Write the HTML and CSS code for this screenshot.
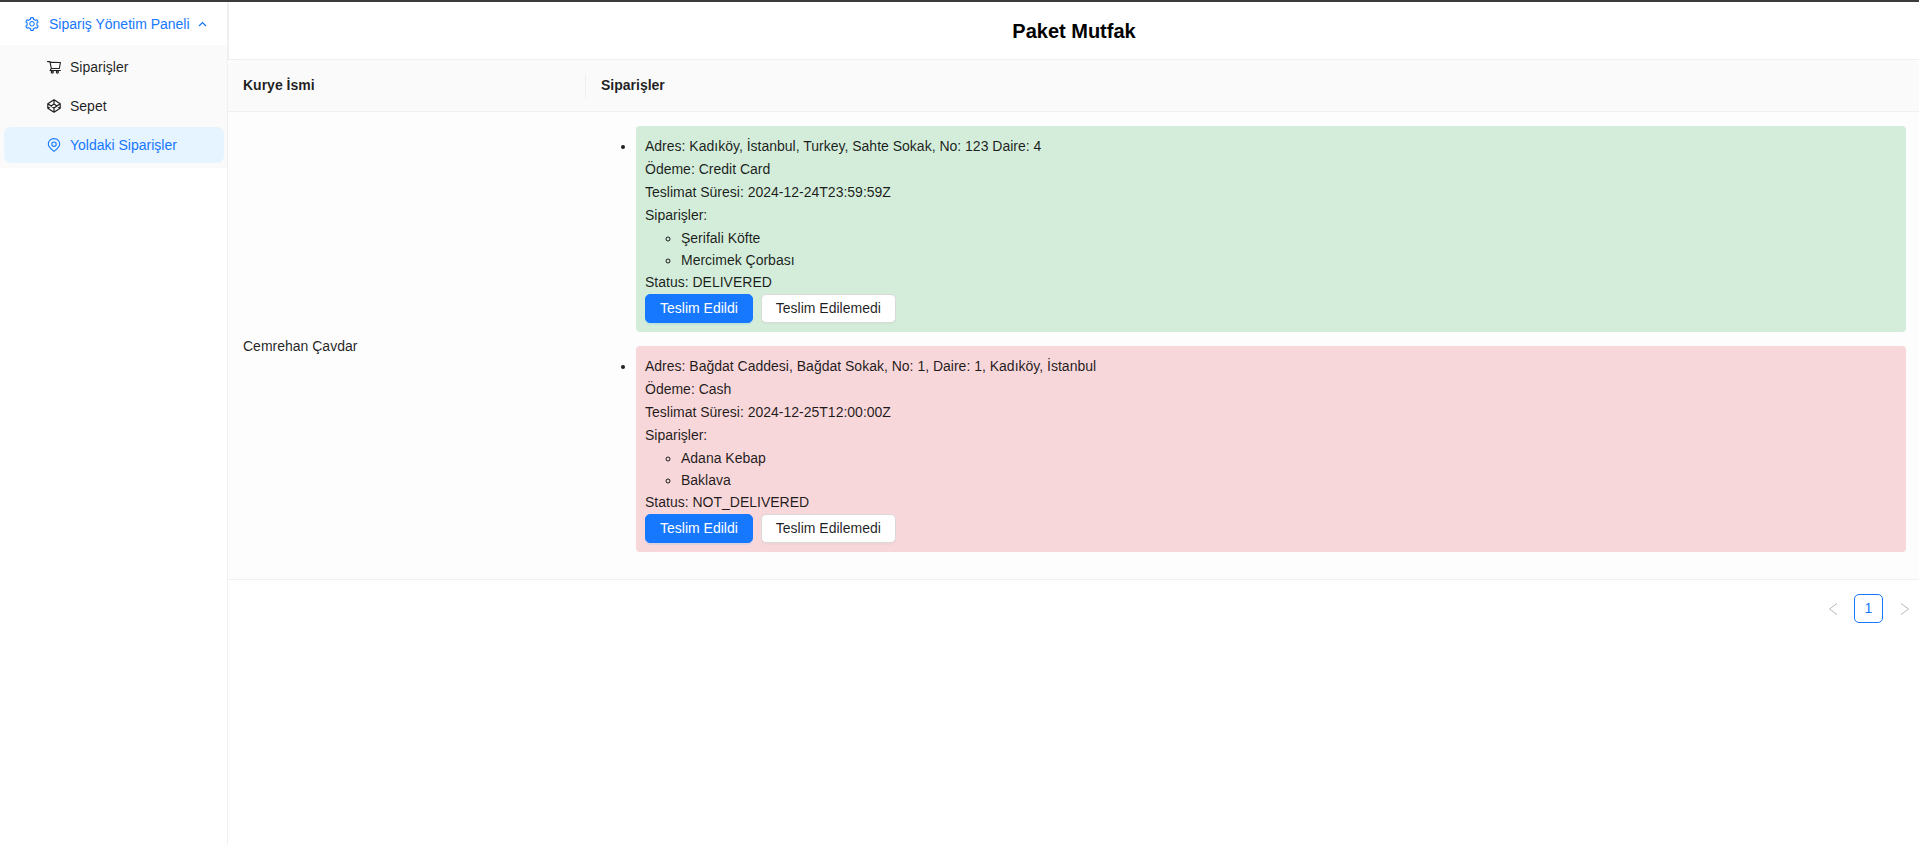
FILE: index.html
```html
<!DOCTYPE html>
<html lang="tr">
<head>
<meta charset="utf-8">
<title>Paket Mutfak</title>
<link rel="stylesheet" href="styles.css">
</head>
<body>
<div class="layout">
  <nav class="sidebar">
    <button class="menu-title" type="button" aria-expanded="true">
      <svg class="icon" viewBox="64 64 896 896" fill="currentColor" aria-hidden="true"><path d="M924.8 625.7l-65.5-56c3.1-19 4.7-38.4 4.7-57.8s-1.6-38.8-4.7-57.8l65.5-56a32.03 32.03 0 009.3-35.2l-.9-2.6a443.74 443.74 0 00-79.7-137.9l-1.8-2.1a32.12 32.12 0 00-35.1-9.5l-81.3 28.9c-30-24.6-63.5-44-99.7-57.6l-15.7-85a32.05 32.05 0 00-25.8-25.7l-2.7-.5c-52.1-9.4-106.9-9.4-159 0l-2.7.5a32.05 32.05 0 00-25.8 25.7l-15.8 85.4a351.86 351.86 0 00-99 57.4l-81.9-29.1a32 32 0 00-35.1 9.5l-1.8 2.1a446.02 446.02 0 00-79.7 137.9l-.9 2.6c-4.5 12.5-.8 26.5 9.3 35.2l66.3 56.6c-3.1 18.8-4.6 38-4.6 57.1 0 19.2 1.5 38.4 4.6 57.1L99 625.5a32.03 32.03 0 00-9.3 35.2l.9 2.6c18.1 50.4 44.9 96.9 79.7 137.9l1.8 2.1a32.12 32.12 0 0035.1 9.5l81.9-29.1c29.8 24.5 63.1 43.9 99 57.4l15.8 85.4a32.05 32.05 0 0025.8 25.7l2.7.5a449.4 449.4 0 00159 0l2.7-.5a32.05 32.05 0 0025.8-25.7l15.7-85a350 350 0 0099.7-57.6l81.3 28.9a32 32 0 0035.1-9.5l1.8-2.1c34.8-41.1 61.6-87.5 79.7-137.9l.9-2.6c4.5-12.3.8-26.3-9.3-35zM788.3 465.9c2.5 15.1 3.8 30.6 3.8 46.1s-1.3 31-3.8 46.1l-6.6 40.1 74.7 63.9a370.03 370.03 0 01-42.6 73.6L721 702.8l-31.4 25.8c-23.9 19.6-50.5 35-79.3 45.8l-38.1 14.3-17.9 97a377.5 377.5 0 01-85 0l-17.9-97.2-37.8-14.5c-28.5-10.8-55-26.2-78.7-45.7l-31.4-25.9-93.4 33.2c-17-22.9-31.2-47.6-42.6-73.6l75.5-64.5-6.5-40c-2.4-14.9-3.7-30.3-3.7-45.5 0-15.3 1.2-30.6 3.7-45.5l6.5-40-75.5-64.5c11.3-26.1 25.6-50.7 42.6-73.6l93.4 33.2 31.4-25.9c23.7-19.5 50.2-34.9 78.7-45.7l37.9-14.3 17.9-97.2c28.1-3.2 56.8-3.2 85 0l17.9 97 38.1 14.3c28.7 10.8 55.4 26.2 79.3 45.8l31.4 25.8 92.8-32.9c17 22.9 31.2 47.6 42.6 73.6L781.8 426l6.5 39.9zM512 326c-97.2 0-176 78.8-176 176s78.8 176 176 176 176-78.8 176-176-78.8-176-176-176zm79.2 255.2A111.6 111.6 0 01512 614c-29.9 0-58-11.7-79.2-32.8A111.6 111.6 0 01400 502c0-29.9 11.7-58 32.8-79.2C454 401.6 482.1 390 512 390c29.9 0 58 11.6 79.2 32.8A111.6 111.6 0 01624 502c0 29.9-11.7 58-32.8 79.2z"/></svg>
      <span class="menu-label">Sipariş Yönetim Paneli</span>
      <svg class="caret" viewBox="0 0 9 6" fill="none" stroke="currentColor" stroke-width="1.2" aria-hidden="true"><path d="M1 5l3.500-3.500L8 5"/></svg>
    </button>
    <ul class="submenu">
      <li><a class="menu-item" href="#siparisler">
        <svg class="icon" viewBox="64 64 896 896" fill="currentColor" fill-rule="evenodd" aria-hidden="true"><path d="M922.9 701.9H327.4l29.9-60.9 496.8-.9c16.8 0 31.2-12 34.2-28.6l68.8-385.1c1.8-10.1-.9-20.5-7.5-28.4a34.99 34.99 0 00-26.6-12.5l-632-2.1-5.4-25.4c-3.4-16.2-18-28-34.6-28H96.5a35.3 35.3 0 100 70.6h125.9L246 312.8l58.1 281.3-74.8 122.1a34.96 34.96 0 00-3 36.8c6 11.9 18.1 19.4 31.5 19.4h62.8a102.43 102.43 0 00-20.6 61.7c0 56.6 46 102.6 102.6 102.6s102.6-46 102.6-102.6c0-22.3-7.4-44-20.6-61.7h161.1a102.43 102.43 0 00-20.6 61.7c0 56.6 46 102.6 102.6 102.6s102.6-46 102.6-102.6c0-22.3-7.4-44-20.6-61.7H923c19.4 0 35.3-15.8 35.3-35.3a35.42 35.42 0 00-35.4-35.2zM305.7 253l575.8 1.9-56.4 315.8-452.3.8L305.7 253zM402.600 802.500a31.600 31.600 0 100 63.200 31.600 31.600 0 000-63.200zM727.400 802.500a31.600 31.600 0 100 63.200 31.600 31.600 0 000-63.200z"/></svg>
        <span>Siparişler</span></a></li>
      <li><a class="menu-item" href="#sepet">
        <svg class="icon" viewBox="0 0 14 14" fill="none" stroke="currentColor" stroke-width="1.2" stroke-linejoin="round" aria-hidden="true"><path d="M7 .8L13.200 4.800v4.400L7 13.200.8 9.200V4.800zM.8 4.800L7 9l6.200-4.200M.8 9.200L7 5l6.200 4.200M7 .8V5M7 9v4.200"/></svg>
        <span>Sepet</span></a></li>
      <li><a class="menu-item menu-item-selected" href="#yoldaki" aria-current="page">
        <svg class="icon" viewBox="0 0 14 14" fill="none" stroke="currentColor" stroke-width="1.1" aria-hidden="true"><path d="M7 13.300C5 11.800 1.300 9.200 1.300 6.100a5.700 5.500 0 0111.400 0C12.700 9.200 9 11.800 7 13.300z"/><circle cx="7" cy="6.200" r="2.200"/></svg>
        <span>Yoldaki Siparişler</span></a></li>
    </ul>
  </nav>
  <main class="content">
    <header class="page-header"><h1>Paket Mutfak</h1></header>
    <table class="courier-table">
      <thead>
        <tr><th class="courier-col" scope="col">Kurye İsmi</th><th scope="col">Siparişler</th></tr>
      </thead>
      <tbody>
        <tr>
          <td>Cemrehan Çavdar</td>
          <td>
            <ul class="orders">
              <li class="order order-delivered">
                <div>Adres: Kadıköy, İstanbul, Turkey, Sahte Sokak, No: 123 Daire: 4</div>
                <div>Ödeme: Credit Card</div>
                <div>Teslimat Süresi: 2024-12-24T23:59:59Z</div>
                <div>Siparişler:</div>
                <ul class="dishes"><li>Şerifali Köfte</li><li>Mercimek Çorbası</li></ul>
                <div>Status: DELIVERED</div>
                <div class="actions"><button class="btn btn-primary" type="button">Teslim Edildi</button><button class="btn" type="button">Teslim Edilemedi</button></div>
              </li>
              <li class="order order-failed">
                <div>Adres: Bağdat Caddesi, Bağdat Sokak, No: 1, Daire: 1, Kadıköy, İstanbul</div>
                <div>Ödeme: Cash</div>
                <div>Teslimat Süresi: 2024-12-25T12:00:00Z</div>
                <div>Siparişler:</div>
                <ul class="dishes"><li>Adana Kebap</li><li>Baklava</li></ul>
                <div>Status: NOT_DELIVERED</div>
                <div class="actions"><button class="btn btn-primary" type="button">Teslim Edildi</button><button class="btn" type="button">Teslim Edilemedi</button></div>
              </li>
            </ul>
          </td>
        </tr>
      </tbody>
    </table>
    <nav class="pagination" aria-label="Sayfalar">
      <button class="page-arrow" type="button" disabled aria-label="Önceki"><svg viewBox="0 0 10 12" fill="none" stroke="currentColor" aria-hidden="true"><path d="M9 .5L1.500 6 9 11.500"/></svg></button>
      <button class="page-number" type="button" aria-current="page">1</button>
      <button class="page-arrow" type="button" disabled aria-label="Sonraki"><svg viewBox="0 0 10 12" fill="none" stroke="currentColor" aria-hidden="true"><path d="M1 .5L8.500 6 1 11.500"/></svg></button>
    </nav>
  </main>
</div>
</body>
</html>
```
FILE: styles.css
```css
* {
  box-sizing: border-box;
}

body {
  margin: 0;
  background: #fff;
  color: rgba(0, 0, 0, 0.88);
  font: 14px/23px "Liberation Sans", Arial, sans-serif;
}

button {
  font: inherit;
  cursor: pointer;
}

.layout {
  display: flex;
  min-height: 100vh;
  border-top: 2px solid #3c3a3b;
}

.sidebar {
  flex: 0 0 228px;
  border-right: 1px solid #f0f0f0;
}

.menu-title {
  display: flex;
  align-items: center;
  width: 100%;
  height: 43px;
  padding: 1px 20px 0 25px;
  border: 0;
  background: none;
  color: #1677ff;
  white-space: nowrap;
}

.icon {
  flex: none;
  width: 14px;
  height: 14px;
}

.menu-label {
  margin-left: 10px;
}

.caret {
  flex: none;
  width: 9px;
  height: 6px;
  margin-left: 8px;
}

.submenu {
  display: flex;
  flex-direction: column;
  gap: 3px;
  margin: 0;
  padding: 4px 3px 5px 4px;
  background: #fafafa;
  list-style: none;
}

.menu-item {
  display: flex;
  align-items: center;
  gap: 9px;
  height: 36px;
  padding-left: 43px;
  border-radius: 7px;
  color: rgba(0, 0, 0, 0.88);
  text-decoration: none;
}

.menu-item-selected {
  background: #e6f4ff;
  color: #1677ff;
}

.content {
  flex: 1;
  min-width: 0;
}

.page-header {
  display: flex;
  align-items: center;
  justify-content: center;
  height: 58px;
  border-bottom: 1px solid #f0f0f0;
  border-left: 1px solid #f0f0f0;
}

.page-header h1 {
  margin: 0;
  color: #000;
  font-size: 20px;
  line-height: 24px;
}

.courier-table {
  width: 100%;
  border-collapse: separate;
  border-spacing: 0;
}

.courier-table th,
.courier-table td {
  padding: 14px 13px 14px 15px;
  border-bottom: 1px solid #f0f0f0;
  text-align: left;
}

.courier-table th {
  background: #fafafa;
  font-weight: 700;
}

.courier-table td {
  padding-bottom: 13px;
  background: #fdfdfd;
}

.courier-table .courier-col {
  width: 358px;
  border-top-left-radius: 7px;
  background: linear-gradient(#f0f0f0, #f0f0f0) right center / 1px 24px no-repeat #fafafa;
}

.courier-table th:last-child {
  border-top-right-radius: 7px;
}

.orders {
  margin: 0;
  padding-left: 35px;
}

.order {
  margin-bottom: 14px;
  padding: 9px;
  border-radius: 4px;
}

.order-delivered {
  background: #d4edda;
}

.order-failed {
  background: #f8d7da;
}

.dishes {
  margin: 0;
  padding-left: 36px;
  line-height: 22px;
}

.actions {
  display: flex;
  gap: 8px;
}

.btn {
  height: 29px;
  padding: 0 14px;
  border: 1px solid #d9d9d9;
  border-radius: 5px;
  background: #fff;
  box-shadow: 0 2px 0 rgba(0, 0, 0, 0.02);
  color: rgba(0, 0, 0, 0.88);
}

.btn-primary {
  border-color: #1677ff;
  background: #1677ff;
  box-shadow: 0 2px 0 rgba(5, 145, 255, 0.1);
  color: #fff;
}

.pagination {
  display: flex;
  justify-content: flex-end;
  gap: 7px;
  margin-top: 14px;
}

.page-number,
.page-arrow {
  display: flex;
  align-items: center;
  justify-content: center;
  width: 29px;
  height: 29px;
  padding: 0;
  border: 0;
  border-radius: 5px;
  background: none;
}

.page-number {
  border: 1px solid #1677ff;
  background: #fff;
  color: #1677ff;
}

.page-arrow {
  color: #b8b8b8;
}

.page-arrow svg {
  width: 10px;
  height: 12px;
}
```
